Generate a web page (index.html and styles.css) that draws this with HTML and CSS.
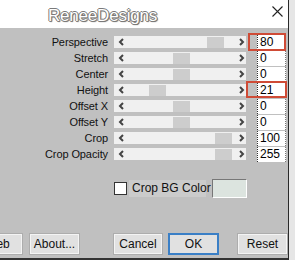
FILE: index.html
```html
<!DOCTYPE html>
<html>
<head>
<meta charset="utf-8">
<link rel="stylesheet" href="styles.css">
</head>
<body>
<div class="window">
  <header class="top">
    <span class="title">ReneeDesigns</span>
    <svg class="close" width="11" height="11" viewBox="0 0 11 11"><path d="M0.5 0.5L10.5 10.5M10.5 0.5L0.5 10.5" stroke="#222" stroke-width="1.1" fill="none"/></svg>
  </header>
  <main class="dialog">
    <div class="rows">
      <div class="row"><span class="label">Perspective</span><div class="slider"><svg class="arr" width="16" height="12" viewBox="0 0 16 12"><path d="M9 3L6 6L9 9" stroke="#444" stroke-width="2" fill="none"/></svg><div class="track"><span class="thumb" style="margin-left:77px"></span></div><svg class="arr r" width="13" height="12" viewBox="0 0 13 12"><path d="M7 3L10 6L7 9" stroke="#444" stroke-width="2" fill="none"/></svg></div><div class="val">80<span class="mark m1"></span></div></div>
      <div class="row"><span class="label">Stretch</span><div class="slider"><svg class="arr" width="16" height="12" viewBox="0 0 16 12"><path d="M9 3L6 6L9 9" stroke="#444" stroke-width="2" fill="none"/></svg><div class="track"><span class="thumb" style="margin-left:43px"></span></div><svg class="arr r" width="13" height="12" viewBox="0 0 13 12"><path d="M7 3L10 6L7 9" stroke="#444" stroke-width="2" fill="none"/></svg></div><div class="val">0</div></div>
      <div class="row"><span class="label">Center</span><div class="slider"><svg class="arr" width="16" height="12" viewBox="0 0 16 12"><path d="M9 3L6 6L9 9" stroke="#444" stroke-width="2" fill="none"/></svg><div class="track"><span class="thumb" style="margin-left:43px"></span></div><svg class="arr r" width="13" height="12" viewBox="0 0 13 12"><path d="M7 3L10 6L7 9" stroke="#444" stroke-width="2" fill="none"/></svg></div><div class="val">0</div></div>
      <div class="row"><span class="label">Height</span><div class="slider"><svg class="arr" width="16" height="12" viewBox="0 0 16 12"><path d="M9 3L6 6L9 9" stroke="#444" stroke-width="2" fill="none"/></svg><div class="track"><span class="thumb" style="margin-left:19px"></span></div><svg class="arr r" width="13" height="12" viewBox="0 0 13 12"><path d="M7 3L10 6L7 9" stroke="#444" stroke-width="2" fill="none"/></svg></div><div class="val">21<span class="mark m2"></span></div></div>
      <div class="row"><span class="label">Offset X</span><div class="slider"><svg class="arr" width="16" height="12" viewBox="0 0 16 12"><path d="M9 3L6 6L9 9" stroke="#444" stroke-width="2" fill="none"/></svg><div class="track"><span class="thumb" style="margin-left:43px"></span></div><svg class="arr r" width="13" height="12" viewBox="0 0 13 12"><path d="M7 3L10 6L7 9" stroke="#444" stroke-width="2" fill="none"/></svg></div><div class="val">0</div></div>
      <div class="row"><span class="label">Offset Y</span><div class="slider"><svg class="arr" width="16" height="12" viewBox="0 0 16 12"><path d="M9 3L6 6L9 9" stroke="#444" stroke-width="2" fill="none"/></svg><div class="track"><span class="thumb" style="margin-left:43px"></span></div><svg class="arr r" width="13" height="12" viewBox="0 0 13 12"><path d="M7 3L10 6L7 9" stroke="#444" stroke-width="2" fill="none"/></svg></div><div class="val">0</div></div>
      <div class="row"><span class="label">Crop</span><div class="slider"><svg class="arr" width="16" height="12" viewBox="0 0 16 12"><path d="M9 3L6 6L9 9" stroke="#444" stroke-width="2" fill="none"/></svg><div class="track"><span class="thumb" style="margin-left:85px"></span></div><svg class="arr r" width="13" height="12" viewBox="0 0 13 12"><path d="M7 3L10 6L7 9" stroke="#444" stroke-width="2" fill="none"/></svg></div><div class="val">100</div></div>
      <div class="row"><span class="label">Crop Opacity</span><div class="slider"><svg class="arr" width="16" height="12" viewBox="0 0 16 12"><path d="M9 3L6 6L9 9" stroke="#444" stroke-width="2" fill="none"/></svg><div class="track"><span class="thumb" style="margin-left:85px"></span></div><svg class="arr r" width="13" height="12" viewBox="0 0 13 12"><path d="M7 3L10 6L7 9" stroke="#444" stroke-width="2" fill="none"/></svg></div><div class="val">255</div></div>
    </div>
    <div class="bgrow">
      <span class="check"></span>
      <span class="bglabel">Crop BG Color</span>
      <span class="swatch"></span>
    </div>
    <div class="buttons">
      <button class="btn web">Web</button>
      <button class="btn about">About...</button>
      <button class="btn cancel">Cancel</button>
      <button class="btn ok">OK</button>
      <button class="btn reset">Reset</button>
    </div>
  </main>
</div>
</body>
</html>
```
FILE: styles.css
```css
html, body {
  margin: 0;
  padding: 0;
  width: 295px;
  height: 260px;
  overflow: hidden;
  background: #e6e6e6;
  font-family: "Liberation Sans", Arial, sans-serif;
}
.window {
  width: 288px;
  height: 260px;
  border-right: 1px solid #2a2a2a;
  display: flex;
  flex-direction: column;
  overflow: hidden;
}
.top {
  height: 28px;
  background: #ffffff;
  display: flex;
  align-items: center;
}
.title {
  margin-left: 48px;
  margin-top: 3px;
  font-size: 17px;
  color: #ffffff;
  letter-spacing: -0.2px;
  text-shadow: -1px 0 0 #7a7a7a, 1px 0 0 #7a7a7a, 0 -1px 0 #7a7a7a, 0 1px 0 #7a7a7a, 1px 1px 1px #555;
}
.close {
  margin-left: auto;
  margin-right: 5px;
  margin-top: -6px;
}
.dialog {
  flex: 1;
  background: #c0c0c0;
  display: flex;
  flex-direction: column;
  border-bottom: 2px solid #333;
}
.rows {
  padding-top: 6px;
  display: flex;
  flex-direction: column;
}
.row {
  height: 16px;
  display: flex;
  align-items: center;
}
.label {
  width: 108px;
  text-align: right;
  font-size: 11px;
  color: #111;
  letter-spacing: -0.1px;
}
.slider {
  margin-left: 6px;
  width: 132px;
  height: 12px;
  background: #f0f0f0;
  display: flex;
  align-items: center;
}
.arr {
  display: block;
  flex: none;
}
.track {
  width: 103px;
  height: 12px;
  display: flex;
}
.thumb {
  width: 17px;
  height: 11px;
  margin-top: 1px;
  background: #cdcdcd;
}
.val {
  position: relative;
  margin-left: 11px;
  width: 29px;
  height: 15px;
  background: #ffffff;
  border-left: 1px dotted #333;
  border-right: 1px dotted #777;
  font-size: 12px;
  line-height: 15px;
  padding-left: 2px;
  box-sizing: border-box;
  color: #000;
}
.mark {
  position: absolute;
  border: 2px solid #cf4b36;
}
.m1 {
  left: -10px;
  right: -1px;
  top: -2px;
  bottom: -1px;
}
.m2 {
  left: -12px;
  right: -2px;
  top: -2px;
  bottom: 0px;
}
.bgrow {
  margin-top: 17px;
  height: 19px;
  display: flex;
  align-items: center;
}
.check {
  margin-left: 114px;
  width: 11px;
  height: 11px;
  background: #fff;
  border: 1px solid #333;
}
.bglabel {
  margin-left: 2px;
  padding: 0 3px;
  height: 17px;
  line-height: 17px;
  width: 77px;
  box-sizing: border-box;
  white-space: nowrap;
  background: #cbcbcb;
  font-size: 12px;
  color: #111;
}
.swatch {
  margin-left: 6px;
  width: 33px;
  height: 17px;
  background: #dce4df;
  border: 1px solid;
  border-color: #777 #fff #fff #777;
}
.buttons {
  margin-top: 35px;
  height: 22px;
  display: flex;
}
.btn {
  flex: none;
  height: 22px;
  width: 51px;
  padding: 0;
  background: #e1e1e1;
  border: 1px solid #adadad;
  box-shadow: inset 0 0 0 1px #f4f4f4;
  font-family: "Liberation Sans", Arial, sans-serif;
  font-size: 12px;
  color: #111;
}
.web { margin-left: -28px; }
.about { margin-left: 6px; }
.cancel { margin-left: 33px; width: 50px; }
.ok {
  margin-left: 5px;
  border: 2px solid #3a7fc6;
  box-shadow: none;
}
.reset { margin-left: 18px; }
```
